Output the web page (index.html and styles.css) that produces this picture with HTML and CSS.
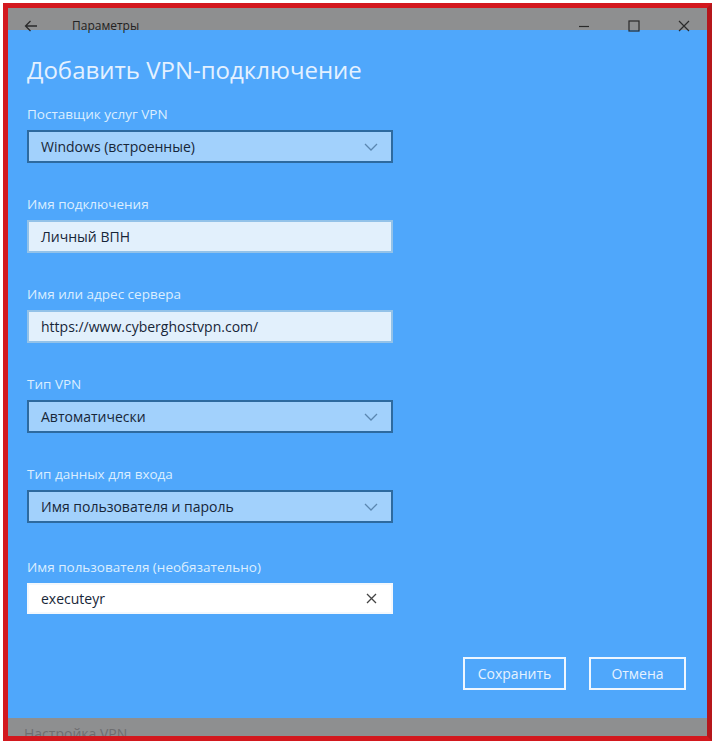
FILE: index.html
```html
<!DOCTYPE html>
<html lang="ru">
<head>
<meta charset="utf-8">
<title>Параметры</title>
<link rel="stylesheet" href="styles.css">
</head>
<body>
<div class="frame">
  <div class="titlebar">
    <div class="tb-left">
      <svg class="back" width="14" height="12" viewBox="0 0 14 12"><path d="M13 6H1.5M6.5 1L1.5 6l5 5" fill="none" stroke="#2a2a2a" stroke-width="1.3"/></svg>
      <span class="tb-title">Параметры</span>
    </div>
    <div class="tb-ctrls">
      <svg width="12" height="12" viewBox="0 0 12 12"><path d="M1 6.5h10" stroke="#2a2a2a" stroke-width="1.2"/></svg>
      <svg width="12" height="12" viewBox="0 0 12 12"><rect x="1" y="1" width="10" height="10" fill="none" stroke="#2a2a2a" stroke-width="1.2"/></svg>
      <svg width="12" height="12" viewBox="0 0 12 12"><path d="M1 1l10 10M11 1L1 11" stroke="#2a2a2a" stroke-width="1.2"/></svg>
    </div>
  </div>
  <div class="content">
    <h1 class="heading">Добавить VPN-подключение</h1>
    <div class="form">
      <div class="field">
        <div class="label">Поставщик услуг VPN</div>
        <div class="box select"><span>Windows (встроенные)</span><svg class="chev" width="14" height="8" viewBox="0 0 14 8"><path d="M1 1l6 6 6-6" fill="none" stroke="#5b87b0" stroke-width="1.3"/></svg></div>
      </div>
      <div class="field">
        <div class="label">Имя подключения</div>
        <div class="box input"><span>Личный ВПН</span></div>
      </div>
      <div class="field">
        <div class="label">Имя или адрес сервера</div>
        <div class="box input"><span>https://www.cyberghostvpn.com/</span></div>
      </div>
      <div class="field">
        <div class="label">Тип VPN</div>
        <div class="box select"><span>Автоматически</span><svg class="chev" width="14" height="8" viewBox="0 0 14 8"><path d="M1 1l6 6 6-6" fill="none" stroke="#5b87b0" stroke-width="1.3"/></svg></div>
      </div>
      <div class="field">
        <div class="label">Тип данных для входа</div>
        <div class="box select"><span>Имя пользователя и пароль</span><svg class="chev" width="14" height="8" viewBox="0 0 14 8"><path d="M1 1l6 6 6-6" fill="none" stroke="#5b87b0" stroke-width="1.3"/></svg></div>
      </div>
      <div class="field last">
        <div class="label">Имя пользователя (необязательно)</div>
        <div class="box input active"><span>executeyr</span><svg class="clear" width="11" height="11" viewBox="0 0 11 11"><path d="M1 1l9 9M10 1L1 10" stroke="#444" stroke-width="1.3"/></svg></div>
      </div>
    </div>
    <div class="actions">
      <button class="btn save">Сохранить</button>
      <button class="btn cancel">Отмена</button>
    </div>
  </div>
  <div class="footer"><span>Настройка VPN</span></div>
</div>
</body>
</html>
```

FILE: styles.css
```css
html, body {
  margin: 0;
  padding: 0;
  background: #ffffff;
}
body {
  font-family: "Open Sans", "Noto Sans", sans-serif;
}
.frame {
  margin: 3px 6px 3px 3px;
  height: 728px;
  border: 5px solid #d3181e;
  border-right-color: #b5161b;
  display: flex;
  flex-direction: column;
  background: #4fa7fb;
  overflow: hidden;
}
.titlebar {
  height: 22px;
  flex: none;
  box-sizing: border-box;
  background: #8e8f90;
  display: flex;
  align-items: center;
  justify-content: space-between;
  padding: 13px 17px 0 16px;
}
.tb-left {
  display: flex;
  align-items: center;
}
.tb-title {
  margin-left: 34px;
  font-size: 12px;
  line-height: 14px;
  color: #222;
}
.tb-ctrls {
  display: flex;
  gap: 38px;
  align-items: center;
}
.content {
  flex: 1;
  display: flex;
  flex-direction: column;
  padding: 23px 21px 0 19px;
}
.heading {
  margin: 0;
  font-weight: 400;
  font-size: 24px;
  line-height: 34px;
  color: #e4f1ff;
}
.form {
  margin-top: 17px;
  display: flex;
  flex-direction: column;
  gap: 31px;
}
.field {
  display: flex;
  flex-direction: column;
}
.field.last {
  margin-top: 3px;
}
.label {
  font-size: 13.5px;
  line-height: 20px;
  color: #dbeeff;
  margin-bottom: 6px;
}
.box {
  width: 366px;
  height: 33px;
  box-sizing: border-box;
  display: flex;
  align-items: center;
  justify-content: space-between;
  padding: 0 11px 0 12px;
  font-size: 14px;
  color: #172638;
}
.select {
  background: #a2d1fc;
  border: 2px solid #2d6a9f;
}
.input {
  background: #e2f0fc;
  border: 2px solid #93c2e8;
}
.input.active {
  background: #ffffff;
  border-color: #f3f8fd;
  height: 31px;
}
.chev {
  margin-right: 2px;
}
.clear {
  margin-right: 3px;
}
.actions {
  margin-top: 43px;
  display: flex;
  justify-content: flex-end;
  gap: 23px;
}
.btn {
  font-family: inherit;
  font-size: 14px;
  color: #e6f2ff;
  background: transparent;
  border: 2px solid #eef6ff;
  height: 33px;
  padding: 0;
}
.save {
  width: 103px;
}
.cancel {
  width: 97px;
}
.footer {
  height: 18px;
  flex: none;
  background: #8e8f90;
  overflow: hidden;
  padding-left: 16px;
}
.footer span {
  display: block;
  font-size: 14px;
  line-height: 20px;
  margin-top: 6px;
  color: #6e6e70;
}
```
